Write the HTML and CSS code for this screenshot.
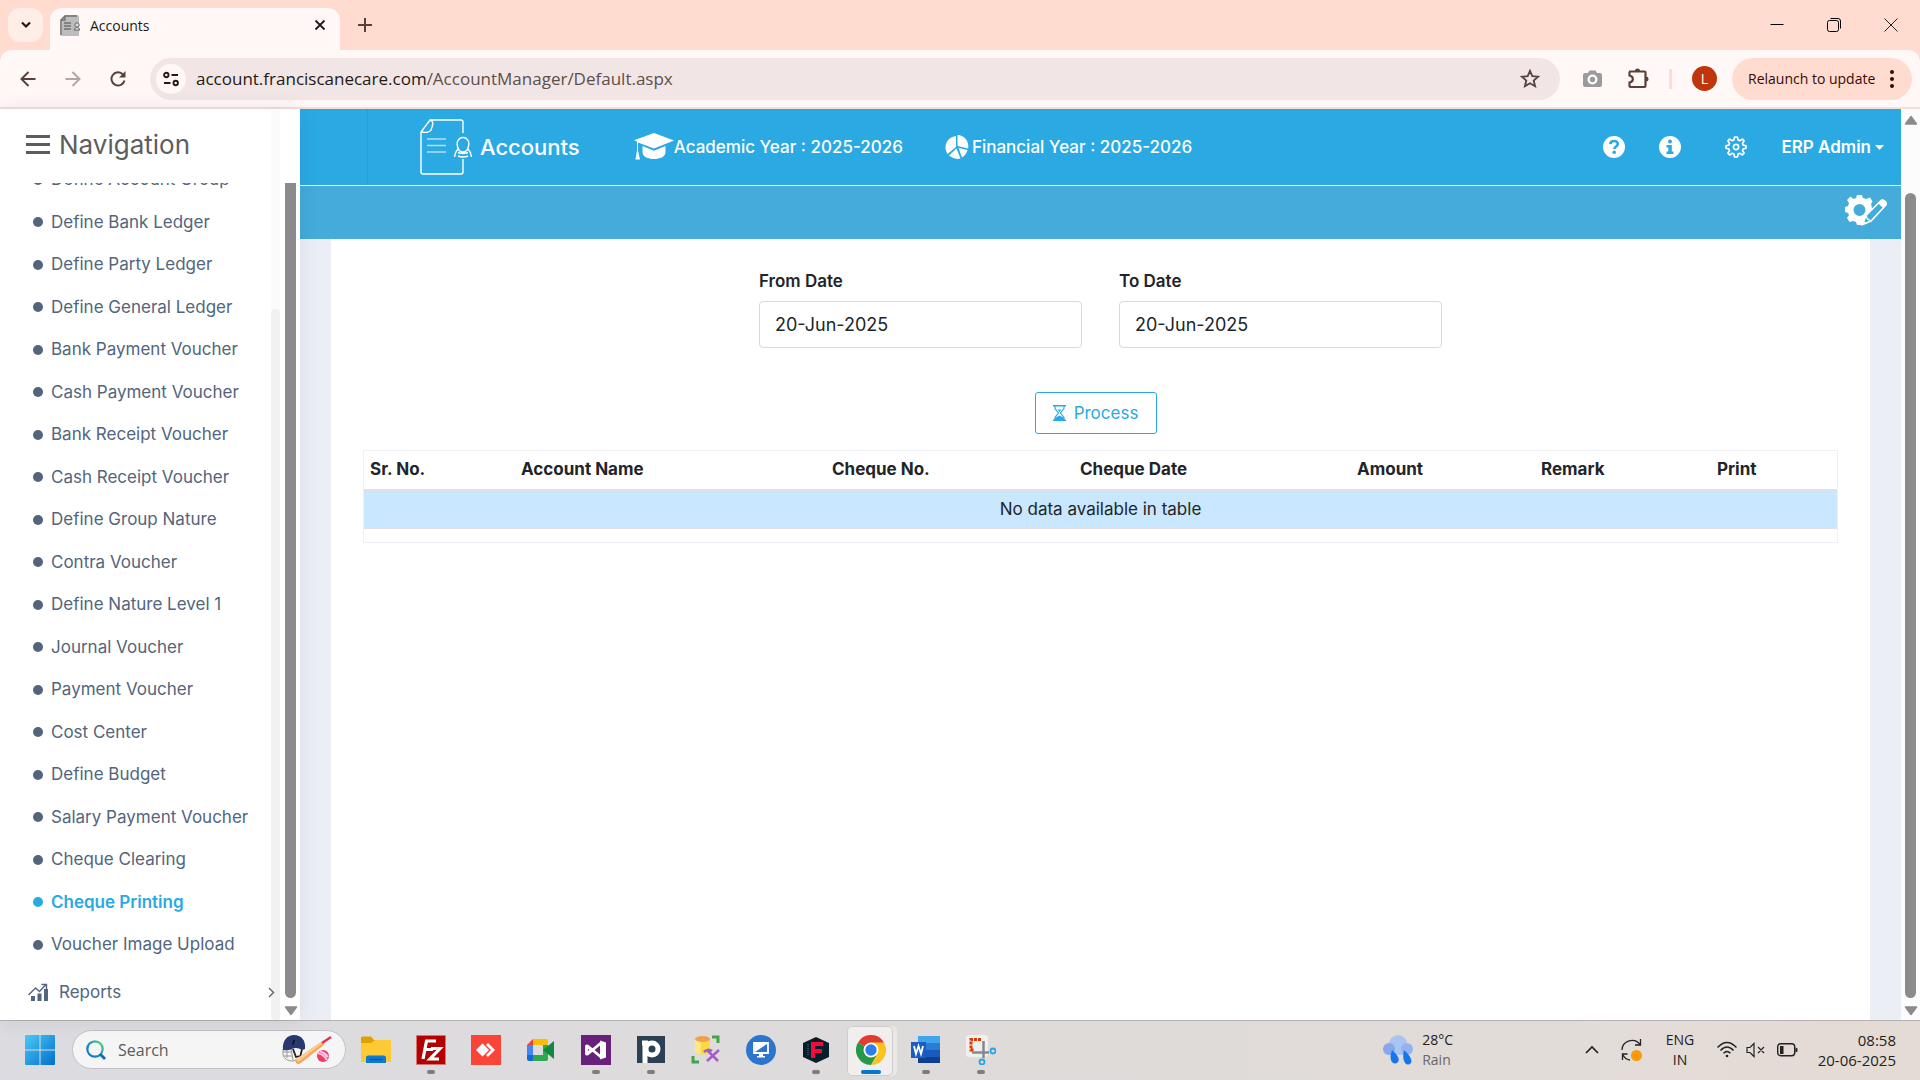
FILE: index.html
```html
<!DOCTYPE html>
<html lang="en">
<head>
<meta charset="utf-8">
<title>Accounts</title>
<link rel="stylesheet" href="styles.css">
</head>
<body>
<header class="browser">
  <div class="tabstrip">
    <button class="tab-search" aria-label="Search tabs"><svg width="12" height="8" viewBox="0 0 12 8"><path d="M2 1.500l4 4 4-4" fill="none" stroke="#231917" stroke-width="2.200"/></svg></button>
    <div class="tab">
      <svg width="20" height="21" viewBox="0 0 20 21"><path d="M5 0h12a2 2 0 0 1 2 2v19H2a2 2 0 0 1-2-2V5z" fill="#bdbdbd"/><path d="M1 20V5l4-4h12M5 1v4H1M4 8h7M4 11h7M4 14h7" fill="none" stroke="#707070" stroke-width="1.300"/><circle cx="17" cy="10" r="2.200" fill="#ddd" stroke="#666"/><path d="M14 15q3-6 6 0z" fill="#ddd" stroke="#666"/></svg>
      <span class="tab-title">Accounts</span>
      <button class="plain" aria-label="Close tab"><svg width="12" height="12" viewBox="0 0 12 12"><path d="M1.500 1.500l9 9M10.500 1.500l-9 9" stroke="#231917" stroke-width="1.800"/></svg></button>
    </div>
    <button class="plain" aria-label="New tab"><svg width="14" height="14" viewBox="0 0 14 14"><path d="M7 0v14M0 7h14" stroke="#5b403a" stroke-width="2"/></svg></button>
    <div class="window-buttons">
      <button class="plain" aria-label="Minimize"><svg width="14" height="14" viewBox="0 0 14 14"><path d="M.5 6.500h13" stroke="#000"/></svg></button>
      <button class="plain" aria-label="Restore"><svg width="14" height="14" viewBox="0 0 14 14"><path d="M.5 4.500a2 2 0 0 1 2-2h7a2 2 0 0 1 2 2v7a2 2 0 0 1-2 2h-7a2 2 0 0 1-2-2zM3.500.5H11A2.500 2.500 0 0 1 13.500 3v7.500" fill="none" stroke="#000"/></svg></button>
      <button class="plain" aria-label="Close"><svg width="14" height="14" viewBox="0 0 14 14"><path d="M.5.5l13 13M13.500.5l-13 13" stroke="#222"/></svg></button>
    </div>
  </div>
  <div class="toolbar">
    <button class="plain" aria-label="Back"><svg width="16" height="16" viewBox="0 0 16 16"><path d="M15.500 8H2M8.500 1L1.500 8l7 7" fill="none" stroke="#5b403a" stroke-width="2"/></svg></button>
    <button class="plain" aria-label="Forward"><svg width="16" height="16" viewBox="0 0 16 16"><path d="M.5 8H14M7.500 1l7 7-7 7" fill="none" stroke="#b5a6a3" stroke-width="2"/></svg></button>
    <button class="plain" aria-label="Reload"><svg width="16" height="16" viewBox="0 0 16 16"><path d="M14.500 9.500A6.600 6.600 0 1 1 13 3.500" fill="none" stroke="#5b403a" stroke-width="2"/><path d="M15.500 0v6.500H9z" fill="#5b403a"/></svg></button>
    <div class="omnibox">
      <button class="site-info" aria-label="Site information"><svg width="16" height="16" viewBox="0 0 16 16"><g fill="none" stroke="#231917" stroke-width="1.900"><circle cx="3.300" cy="4" r="2.200"/><path d="M8.500 4H15M1 12h6.500"/><circle cx="12.700" cy="12" r="2.200"/></g></svg></button>
      <span class="url">account.franciscanecare.com<span class="path">/AccountManager/Default.aspx</span></span>
      <button class="plain" aria-label="Bookmark"><svg width="20" height="19" viewBox="0 0 20 19"><path d="M10 1.800l2.300 5.400 5.900.5-4.500 3.800 1.400 5.700L10 14.200l-5.100 3 1.400-5.700L1.800 7.700l5.900-.5z" fill="none" stroke="#53433f" stroke-width="1.800"/></svg></button>
    </div>
    <button class="plain" aria-label="Screenshot"><svg width="19" height="18" viewBox="0 0 19 18"><path d="M2 3h3l1.500-2.500h6L14 3h3a2 2 0 0 1 2 2v10a2 2 0 0 1-2 2H2a2 2 0 0 1-2-2V5a2 2 0 0 1 2-2z" fill="#9b9b9b"/><circle cx="9.500" cy="9.500" r="5" fill="#fff"/><circle cx="9.500" cy="9.500" r="2.700" fill="#9b9b9b"/></svg></button>
    <button class="plain" aria-label="Extensions"><svg width="21" height="21" viewBox="0 0 21 21"><path d="M2 3.500h14.500a1 1 0 0 1 1 1V18a1 1 0 0 1-1 1H2.500a1 1 0 0 1-1-1v-3.500c4.500-1 4.500-6 0-7V4.500z" fill="none" stroke="#5b403a" stroke-width="2.200"/><path d="M7 3a2.500 2.500 0 0 1 5 0zM18 8.500a2.500 2.500 0 0 1 0 5z" fill="#5b403a"/></svg></button>
    <span class="toolbar-rule"></span>
    <button class="avatar">L</button>
    <button class="relaunch">Relaunch to update<svg width="4" height="18" viewBox="0 0 4 18" fill="#3a0a00"><circle cx="2" cy="2" r="2"/><circle cx="2" cy="9" r="2"/><circle cx="2" cy="16" r="2"/></svg></button>
  </div>
</header>

<div class="app">
  <nav class="sidebar">
    <div class="sidebar-head"><svg width="24" height="19" viewBox="0 0 24 19"><path d="M0 1.500h24M0 9.500h24M0 17.500h24" stroke="#5d5d5d" stroke-width="2.800"/></svg>Navigation</div>
    <div class="sidebar-scroll">
      <ul class="menu">
        <li><a href="#">Define Account Group</a></li>
        <li><a href="#">Define Bank Ledger</a></li>
        <li><a href="#">Define Party Ledger</a></li>
        <li><a href="#">Define General Ledger</a></li>
        <li><a href="#">Bank Payment Voucher</a></li>
        <li><a href="#">Cash Payment Voucher</a></li>
        <li><a href="#">Bank Receipt Voucher</a></li>
        <li><a href="#">Cash Receipt Voucher</a></li>
        <li><a href="#">Define Group Nature</a></li>
        <li><a href="#">Contra Voucher</a></li>
        <li><a href="#">Define Nature Level 1</a></li>
        <li><a href="#">Journal Voucher</a></li>
        <li><a href="#">Payment Voucher</a></li>
        <li><a href="#">Cost Center</a></li>
        <li><a href="#">Define Budget</a></li>
        <li><a href="#">Salary Payment Voucher</a></li>
        <li><a href="#">Cheque Clearing</a></li>
        <li><a href="#" class="active">Cheque Printing</a></li>
        <li><a href="#">Voucher Image Upload</a></li>
      </ul>
      <a href="#" class="reports"><svg width="21" height="19" viewBox="0 0 21 19" fill="#52657d"><path d="M3 13h4v5H3zM9.500 10.500h4V18h-4zM16 6h4v12h-4z"/><path d="M.5 12L7.500 5l4 3.500 6-6.500M13.500 1.500h5v4.500" fill="none" stroke="#52657d" stroke-width="1.400"/></svg><span>Reports</span><svg width="7" height="11" viewBox="0 0 7 11"><path d="M1 1l4.500 4.500L1 10" fill="none" stroke="#52657d" stroke-width="1.400"/></svg></a>
    </div>
    <div class="inner-track"><div class="inner-thumb"></div></div>
    <div class="side-bar"><div class="thumb"></div><svg width="14" height="10" viewBox="0 0 14 10"><path d="M1.500 1h11L7 8.500z" fill="#8b8b8b" stroke="#8b8b8b" stroke-width="1.500" stroke-linejoin="round"/></svg></div>
  </nav>

  <main class="main">
    <div class="topbar">
      <span class="topbar-rule"></span>
      <svg class="logo" width="52" height="56" viewBox="0 0 52 56" fill="none" stroke="#fff" stroke-width="1.400"><path d="M43 14V3a2 2 0 0 0-2-2H10L1 13v40a2 2 0 0 0 2 2h38a2 2 0 0 0 2-2V40M10 1.500c3 0 3 2 2.500 5L11 11c-1 2-5 3-9.500 2"/><path d="M7 20h19M7 26.500h19M7 33h19" stroke="#b5e0f6"/><path d="M38 29c-5-14 15-14 10 0-1 3-3 4-5 4s-4-1-5-4zM38 30c-2 2-3 5-3.500 8M48 30c2 2 3 5 3.500 8M38 33.500q5 2 10 0M38 37q5 2 10 0"/></svg>
      <h1 class="app-name">Accounts</h1>
      <div class="year academic"><svg width="40" height="28" viewBox="0 0 40 28" fill="#fff"><path d="M20 0l20 7.500-20 8L4 9.500v8l2 9H1.500L3 17V8.500L0 7.300z"/><path d="M8.500 13L20 17.700 31.500 13v6c0 5-6 7-11.500 7S8.500 24 8.500 19z"/></svg><span>Academic Year : 2025-2026</span></div>
      <div class="year financial"><svg width="24" height="24" viewBox="0 0 24 24" fill="#fff"><path d="M12.500 0A11 11 0 0 1 23 13.500L12.500 11zM11 1v11L2.500 19A11.500 11.500 0 0 1 11 1zM11.500 13.500l4 10q-6 1.500-11.500-3zM13.500 13l9 2q-1 5-5.500 7.500z"/></svg><span>Financial Year : 2025-2026</span></div>
      <div class="actions">
        <button class="plain" aria-label="Help"><svg width="22" height="22" viewBox="0 0 22 22"><circle cx="11" cy="11" r="11" fill="#fff"/><path d="M7.300 8.200c.3-4.400 7.600-4.100 7.500-.2 0 2.500-3.300 2.400-3.500 5" fill="none" stroke="#2ba9e3" stroke-width="2.700"/><circle cx="11.200" cy="16.300" r="1.800" fill="#2ba9e3"/></svg></button>
        <button class="plain" aria-label="Information"><svg width="22" height="22" viewBox="0 0 22 22"><circle cx="11" cy="11" r="11" fill="#fff"/><path d="M7.500 9h5.300v6.500h1.700V18h-7v-2.500h1.800v-4H7.500z" fill="#2ba9e3"/><circle cx="11" cy="5.500" r="2" fill="#2ba9e3"/></svg></button>
        <button class="plain settings" aria-label="Settings"><svg width="22" height="22" viewBox="0 0 22 22" fill="none" stroke="#fff" stroke-width="1.700"><path d="M9.600 1h2.800l.7 3 1.600.7 2.700-1.600 1.700 1.700-1.600 2.700.7 1.600 2.800.7v2.400l-2.800.7-.7 1.600 1.600 2.700-1.700 1.700-2.700-1.600-1.600.7-.7 3H9.600l-.7-3-1.600-.7-2.700 1.600-1.700-1.700 1.600-2.700-.7-1.600-2.800-.7V9.800l2.800-.7.7-1.600-1.600-2.700 1.700-1.700 2.700 1.600 1.600-.7z" stroke-linejoin="round"/><circle cx="11" cy="11" r="2.600"/></svg></button>
        <button class="user">ERP Admin<svg width="9" height="5" viewBox="0 0 9 5"><path d="M0 0h9L4.500 5z" fill="#fff"/></svg></button>
      </div>
    </div>
    <div class="subbar"><button class="plain" aria-label="Customize"><svg width="42" height="31" viewBox="0 0 42 31"><path fill="#fff" fill-rule="evenodd" d="M12 0h5l1 3 3 1 4-1.500 2.500 4L26 9l1 4 2 1-9 11-2 5h-6l-1-3-3-1-3.500 1L2 23l2-3-1-2-3-1v-5l3-1 1-3-2-3 3.500-3.500L8.500 4 11 3zM14.500 9a6 6 0 1 0 0 12 6 6 0 0 0 0-12z"/><path d="M17.500 29.500l3.500-9L36 5.500q2-1.500 4.500 1.200 1.500 2 0 3.800L26 26z" fill="#44abdb" stroke="#fff" stroke-width="1.600"/><path d="M33 8l4-3.500q5 1 4.500 5L38 13zM17 30l1.500-4 3 2.500z" fill="#fff"/><path d="M21 20.500l1.500 3.500L26 26" fill="none" stroke="#fff" stroke-width="1.300"/></svg></button></div>
    <div class="content">
      <form class="filters">
        <div class="field"><label for="from">From Date</label><input id="from" type="text" value="20-Jun-2025"></div>
        <div class="field"><label for="to">To Date</label><input id="to" type="text" value="20-Jun-2025"></div>
      </form>
      <div class="process-row"><button class="process"><svg width="13" height="16" viewBox="0 0 13 16"><path d="M0 .8h13M0 15.200h13" stroke="#2ba9e3" stroke-width="1.600"/><path d="M2 1v2.500L5.500 8 2 12.500V15M11 1v2.500L7.500 8l3.500 4.500V15" fill="none" stroke="#2ba9e3" stroke-width="1.200"/><path d="M4.500 4.500h4L6.500 7zM2 15v-2L6.500 10.500 11 13v2z" fill="#2ba9e3"/></svg>Process</button></div>
      <div class="table-box">
        <table>
          <colgroup><col class="c-sr"><col class="c-name"><col class="c-no"><col class="c-date"><col class="c-amount"><col class="c-remark"><col class="c-print"></colgroup>
          <thead><tr><th>Sr. No.</th><th>Account Name</th><th>Cheque No.</th><th>Cheque Date</th><th>Amount</th><th>Remark</th><th>Print</th></tr></thead>
          <tbody><tr><td colspan="7">No data available in table</td></tr></tbody>
        </table>
      </div>
    </div>
  </main>
  <div class="page-bar"><svg width="14" height="10" viewBox="0 0 14 10"><path d="M1.500 9h11L7 1.500z" fill="#8b8b8b" stroke="#8b8b8b" stroke-width="1.500" stroke-linejoin="round"/></svg><div class="thumb"></div><svg width="14" height="10" viewBox="0 0 14 10"><path d="M1.500 1h11L7 8.500z" fill="#8b8b8b" stroke="#8b8b8b" stroke-width="1.500" stroke-linejoin="round"/></svg></div>
</div>

<footer class="taskbar">
  <button class="plain start" aria-label="Start"><svg width="30" height="30" viewBox="0 0 30 30"><defs><linearGradient id="win" x1="0" y1="0" x2="1" y2="1"><stop offset="0" stop-color="#4cc9f8"/><stop offset="1" stop-color="#006fcc"/></linearGradient></defs><path d="M1 0h13.500v14.500H0V1a1 1 0 0 1 1-1zM15.500 0H29a1 1 0 0 1 1 1v13.500H15.500zM0 15.500h14.500V30H1a1 1 0 0 1-1-1zM15.500 15.500H30V29a1 1 0 0 1-1 1H15.500z" fill="url(#win)"/></svg></button>
  <label class="search">
    <svg width="20" height="20" viewBox="0 0 20 20"><defs><linearGradient id="lens" x1="1" y1="0" x2="0" y2="1"><stop offset="0" stop-color="#5ddb7a"/><stop offset=".5" stop-color="#1b8fc4"/><stop offset="1" stop-color="#0c6fd0"/></linearGradient></defs><circle cx="9" cy="9" r="7.700" fill="none" stroke="url(#lens)" stroke-width="2.200"/><path d="M14 14l5 5" stroke="#0b6cbf" stroke-width="2.800"/></svg>
    <input type="text" placeholder="Search" aria-label="Search">
    <svg width="50" height="29" viewBox="0 0 50 29"><g fill="none" stroke="#999" stroke-width="1"><path d="M1 14v6q2 6 10 6l3-1M1 17h8M2 21h8M5 14v9M9 14l2 11"/><path d="M11 14l3 8 4-1M20 14l-2 9" stroke="#222" stroke-width="1.800"/></g><path d="M1 15C0 5 6 0 12 0c7 0 12 5 11 14q-3 1.500-6-.5-4-1-7 .5-4 2-9 1z" fill="#26386f"/><path d="M11 10q0-3 1.500-5" stroke="#111" stroke-width="1.500" fill="none"/><path d="M13 25L39 7q3 0 3 3L19 28q-3 2-5 0z" fill="#f2a95c"/><path d="M14 24L39 7l2 1L16 27z" fill="#fbcb91"/><path d="M40 8l9-6" stroke="#e0364c" stroke-width="2.500"/><circle cx="41" cy="21" r="6" fill="#ee3e5d"/><path d="M36 18q5 1 9 7M38 16q5 2 8 6" stroke="#ffc0e8" stroke-width="2.200" fill="none"/></svg>
  </label>
  <div class="apps">
    <button class="app-icon" aria-label="File Explorer"><svg width="30" height="30" viewBox="0 0 30 30"><path d="M0 3a1.500 1.500 0 0 1 1.500-1.500H10L13 5h16v5H0z" fill="#dfa000"/><path d="M0 8h10l4-3h15a1 1 0 0 1 1 1v21H0z" fill="#fdc935"/><path d="M5 28v-5a2.500 2.500 0 0 1 2.500-2.500h15A2.500 2.500 0 0 1 25 23v5z" fill="#0a7bd0"/><path d="M8.500 24.500h13" stroke="#075397" stroke-width="1.300"/></svg></button>
    <button class="app-icon running" aria-label="FileZilla"><svg width="30" height="30" viewBox="0 0 30 30"><path d="M.5.5h29v29H.5z" fill="#b30000" stroke="#d77" stroke-dasharray="2 1"/><path d="M7 24L10.500 6H20M8.500 14.500H17M15 13.500h9L14 24h9" fill="none" stroke="#fff" stroke-width="3.200"/></svg></button>
    <button class="app-icon" aria-label="AnyDesk"><svg width="30" height="30" viewBox="0 0 30 30"><path d="M0 0h30v30H0z" fill="#fb4438"/><path d="M5 15l6.500-6.500L18 15l-6.500 6.500z" fill="#fff"/><path d="M16 9l6 6-6 6" fill="none" stroke="#fff" stroke-width="2.800"/></svg></button>
    <button class="app-icon" aria-label="Google Meet"><svg width="30" height="30" viewBox="0 0 30 30"><path d="M1 10l6-6v6z" fill="#e94235"/><path d="M7 4h13a2 2 0 0 1 2 2v4H7z" fill="#fbbc04"/><path d="M1 10h6v12H1z" fill="#4285f4"/><path d="M1 20h6v6H3a2 2 0 0 1-2-2z" fill="#1a67d2"/><path d="M7 20h10V10h5v14a2 2 0 0 1-2 2H7z" fill="#2da94f"/><path d="M17 15l11-9v18z" fill="#11883d"/></svg></button>
    <button class="app-icon running" aria-label="Visual Studio"><svg width="30" height="30" viewBox="0 0 30 30"><path d="M0 0h30v30H0z" fill="#68217a"/><path d="M5.500 11v8L11 15zM6 10.500L20 22M6 19.500L20 8" fill="none" stroke="#fff" stroke-width="2.800" stroke-linejoin="round"/><path d="M19 5.500l6 2v15l-6 2z" fill="#fff"/></svg></button>
    <button class="app-icon running" aria-label="Publisher"><svg width="30" height="30" viewBox="0 0 30 30"><path d="M1 1h28v27H1z" fill="#2d4052"/><path d="M9 28V7M6 8h6" stroke="#fff" stroke-width="5"/><circle cx="16" cy="14" r="6" fill="none" stroke="#fff" stroke-width="5"/></svg></button>
    <button class="app-icon" aria-label="Database tools"><svg width="30" height="30" viewBox="0 0 30 30"><path d="M4 4h15v14q-7 3-15 0z" fill="#ffd93b"/><path d="M4 4h6v15l-6-1z" fill="#ffe97f"/><ellipse cx="11.500" cy="4" rx="7.500" ry="3" fill="#f0a050"/><path d="M21 2h6v6M2 21v6h6" fill="none" stroke="#46a34c" stroke-width="3"/><path d="M13 17q4-4 8-1M16 15l11 11M28 15L16 26" fill="none" stroke="#a55cc8" stroke-width="2.500"/></svg></button>
    <button class="app-icon" aria-label="Remote Desktop"><svg width="30" height="30" viewBox="0 0 30 30"><circle cx="15" cy="15" r="15" fill="#2c75cf"/><path d="M8 8h14v10H8z" fill="none" stroke="#fff" stroke-width="1.800"/><path d="M9 17V9h12zM13 18h4v3h2v1.500h-8V21h2z" fill="#fff"/></svg></button>
    <button class="app-icon running" aria-label="FortiClient"><svg width="30" height="30" viewBox="0 0 30 30"><path d="M15 2l13 6v14l-13 6-13-6V8z" fill="#041e2c"/><path d="M10 7h12v4h-8v3h7v4h-7v5h-4z" fill="#f40a3d"/><path d="M7 9v12" stroke="#456" stroke-width="1.500" stroke-dasharray="1 1"/></svg></button>
    <button class="app-icon running current" aria-label="Chrome"><svg width="30" height="30" viewBox="0 0 30 30"><path d="M15 15L2 7.500a15 15 0 0 1 26 0z" fill="#e33b2e"/><path d="M15 15L2 7.500A15 15 0 0 0 15 30l6.500-11z" fill="#279847"/><path d="M15 7.500h13A15 15 0 0 1 15 30l6.500-11z" fill="#fcc31e"/><circle cx="15" cy="15" r="7.500" fill="#fff"/><circle cx="15" cy="15" r="5.700" fill="#2f7de9"/></svg></button>
    <button class="app-icon running" aria-label="Word"><svg width="30" height="30" viewBox="0 0 30 30"><path d="M7 1h22v7H7z" fill="#41a5ee"/><path d="M7 8h22v7H7z" fill="#2b7cd3"/><path d="M7 15h22v7H7z" fill="#185abd"/><path d="M7 22h22v6H7z" fill="#103f91"/><path d="M0 7h15v16H0z" fill="#1a5dbe"/><path d="M3 11l2 8 2.500-8 2.500 8 2-8" fill="none" stroke="#fff" stroke-width="1.800"/></svg></button>
    <button class="app-icon running" aria-label="Snipping Tool"><svg width="30" height="30" viewBox="0 0 30 30"><rect width="22" height="22" rx="3" fill="#f0f0f0"/><path d="M15 4.500H5V15h3" fill="none" stroke="#d83b01" stroke-width="3" stroke-dasharray="3 1"/><path d="M6 17.500h17M17.500 6v17" stroke="#85898e" stroke-width="2.500"/><circle cx="27" cy="16" r="2.500" fill="none" stroke="#2aa3e8" stroke-width="1.800"/><circle cx="16" cy="27" r="2.500" fill="none" stroke="#2aa3e8" stroke-width="1.800"/></svg></button>
  </div>
  <div class="weather"><svg width="30" height="30" viewBox="0 0 30 30"><circle cx="15" cy="9" r="9" fill="#a9c4f2"/><rect x="5" y="9" width="20" height="11" fill="#a9c4f2"/><circle cx="24" cy="14" r="6" fill="#94b3ec"/><circle cx="6" cy="14" r="6" fill="#86a8e8"/><path d="M9 15q9 8 6 12-3 3-6 0-3-4 0-12zM21 15q9 8 7 13-3 3-6 0-3-4-1-13z" fill="#1677ed"/></svg><div><span>28°C</span><span class="muted">Rain</span></div></div>
  <div class="tray">
    <svg width="14" height="9" viewBox="0 0 14 9"><path d="M1 8l6-6 6 6" fill="none" stroke="#222" stroke-width="1.700"/></svg>
    <svg class="sync" width="22" height="24" viewBox="0 0 22 24"><path d="M1 12A10 10 0 0 1 19 6.500M19.500 1v6H14M9 22a9 9 0 0 1-7-5M1.500 22v-6h5" fill="none" stroke="#222" stroke-width="1.300"/><circle cx="15.500" cy="17.500" r="5.500" fill="#fa9a0a"/></svg>
    <div class="lang"><span>ENG</span><span>IN</span></div>
    <svg class="wifi" width="20" height="17" viewBox="0 0 20 17" fill="none" stroke="#222" stroke-width="1.500"><path d="M.5 6.500q9.500-10 19 0M3.500 9.500q6.500-7 13 0M6.500 12.300q3.500-3.500 7 0"/><circle cx="10" cy="15" r="1.300" fill="#222" stroke="none"/></svg>
    <svg class="sound" width="20" height="16" viewBox="0 0 20 16" fill="none" stroke="#222" stroke-width="1.200"><path d="M1 5.500h3l4-4v13l-4-4H1zM12 5l6 6M18 5l-6 6"/></svg>
    <svg width="21" height="14" viewBox="0 0 21 14"><rect x=".7" y=".7" width="17" height="12" rx="3" fill="none" stroke="#222" stroke-width="1.400"/><path d="M3 3h3.500v8H3zM18.500 4.500l2 1v3l-2 1z" fill="#222"/></svg>
    <div class="clock"><span>08:58</span><span>20-06-2025</span></div>
  </div>
</footer>
</body>
</html>
```
FILE: styles.css
```css
* { box-sizing: border-box; }
body {
  margin: 0;
  height: 100vh;
  display: flex;
  flex-direction: column;
  overflow: hidden;
  font-family: Inter, "Liberation Sans", sans-serif;
  color: #212529;
}
button, input { font: inherit; color: inherit; }
button { padding: 0; border: 0; background: none; }
a { color: inherit; text-decoration: none; }
svg { display: block; flex: none; }
.plain { flex: none; }

/* Browser chrome */
.browser, .taskbar { font-family: "Open Sans", "Noto Sans", sans-serif; flex: none; }
.browser { background: #ffdbd0; border-bottom: 2px solid #f5ddd8; }
.tabstrip { display: flex; align-items: center; height: 50px; padding-left: 8px; }
.tab-search {
  display: grid;
  place-items: center;
  width: 35px;
  height: 34px;
  margin-right: 7px;
  border-radius: 12px;
  background: #ffede7;
}
.tab {
  align-self: flex-end;
  display: flex;
  align-items: center;
  width: 290px;
  height: 42px;
  margin-right: 18px;
  padding: 0 14px 8px 10px;
  border-radius: 12px 12px 0 0;
  background: #fff8f6;
  color: #231917;
  font-size: 14px;
}
.tab-title { flex: 1; padding-left: 10px; }
.window-buttons { display: flex; gap: 43px; margin-left: auto; padding-right: 22px; }
.toolbar {
  display: flex;
  align-items: center;
  height: 57px;
  padding: 0 8px 0 20px;
  border-radius: 12px 12px 0 0;
  background: #fff8f6;
}
.toolbar > .plain { margin-right: 29px; }
.toolbar > .plain:nth-of-type(3) { margin-right: 24px; }
.omnibox {
  flex: 1;
  display: flex;
  align-items: center;
  height: 42px;
  margin-right: 23px;
  padding: 0 20px 0 6px;
  border-radius: 21px;
  background: #f1e6e5;
}
.site-info { display: grid; place-items: center; width: 30px; height: 30px; border-radius: 50%; background: #fff8f6; }
.url { flex: 1; padding-left: 10px; font-size: 17px; color: #231917; }
.path { color: #5c4f4c; }
.toolbar > .plain:nth-of-type(4) { margin-right: 26px; }
.toolbar > .plain:nth-of-type(5) { margin-right: 20px; }
.toolbar-rule { width: 3px; height: 20px; background: #ffdbd0; }
.avatar { width: 25px; height: 25px; margin: 0 15px 0 20px; border-radius: 50%; background: #bf360c; color: #fff; font-size: 14px; }
.relaunch {
  display: flex;
  align-items: center;
  justify-content: space-between;
  width: 180px;
  height: 42px;
  padding: 0 18px 0 16px;
  border-radius: 21px;
  background: #ffdbd0;
  color: #3a0a00;
  font-size: 14px;
  white-space: nowrap;
}

/* Application */
.app { flex: 1; min-height: 0; display: flex; }
.sidebar {
  position: relative;
  z-index: 1;
  flex: none;
  width: 300px;
  display: flex;
  flex-direction: column;
  background: #fff;
  box-shadow: 0 0 20px rgba(0, 0, 0, .08);
}
.sidebar-head {
  display: flex;
  align-items: center;
  gap: 9px;
  flex: none;
  height: 74px;
  padding: 0 0 4px 26px;
  color: #5d5d5d;
  font-size: 26px;
}
.sidebar-scroll { flex: 1; min-height: 0; overflow: hidden; color: #52657d; font-size: 17px; line-height: 1.5; }
.menu { margin: -24px 0 0; padding: 0; list-style: none; }
.menu a { display: flex; align-items: center; gap: 8px; padding: 8px 0 9px 33px; }
.menu a::before { content: ""; width: 10px; height: 10px; border-radius: 50%; background: currentColor; }
.menu .active { color: #2ba9e3; font-weight: 600; }
.reports { display: flex; align-items: center; gap: 10px; padding: 13px 25px 0 28px; }
.reports span { flex: 1; }
.inner-track { position: absolute; z-index: -1; top: 0; bottom: 0; left: 271px; width: 9px; padding-top: 200px; background: #fbfbfb; }
.inner-thumb { height: 100%; border-radius: 4px; background: #f1f1f1; }
.side-bar { position: absolute; top: 74px; bottom: 0; left: 283px; width: 15px; display: flex; flex-direction: column; align-items: center; padding-bottom: 4px; gap: 8px; }
.thumb { flex: 1; width: 11px; background: #8b8b8b; border-radius: 6px; }
.side-bar .thumb { border-radius: 0 0 6px 6px; }

.main { flex: 1; min-width: 0; display: flex; flex-direction: column; background: #ebeff5; }
.topbar { flex: none; display: flex; align-items: center; height: 77px; border-bottom: 1px solid #fff; background: #2ba9e3; color: #fff; white-space: nowrap; }
.topbar-rule { align-self: stretch; width: 1px; margin: 0 52px 0 67px; background: #2a9fd4; }
.app-name { margin: 0 54px 0 8px; font-size: 22px; font-weight: 500; }
.year { display: flex; align-items: center; font-size: 17px; font-weight: 500; }
.academic { margin-right: 42px; }
.financial { gap: 3px; }
.actions { display: flex; align-items: center; margin-left: auto; gap: 34px; padding-right: 17px; }
.settings { margin-left: 10px; }
.user { display: flex; align-items: center; gap: 4px; font-size: 17px; font-weight: 600; }
.subbar { flex: none; display: flex; align-items: center; justify-content: flex-end; height: 53px; padding: 0 14px 4px 0; background: #44abdb; }
.content { flex: 1; margin: 0 31px; padding: 30px 32px 0; background: #fff; }
.filters { display: flex; justify-content: center; gap: 37px; }
.field { width: 323px; }
.field label { display: block; margin-bottom: 8px; font-size: 17px; line-height: 24px; font-weight: 600; }
.field input { width: 100%; height: 47px; padding: 0 15px; border: 1px solid #d8dadd; border-radius: 4px; background: #fff; font-size: 18px; }
.process-row { display: flex; justify-content: center; padding: 44px 10px 16px 0; }
.process {
  display: flex;
  align-items: center;
  justify-content: center;
  gap: 8px;
  width: 122px;
  height: 42px;
  border: 1px solid #2ba9e3;
  border-radius: 3px;
  background: #fff;
  color: #2ba9e3;
  font-size: 17px;
}
.table-box { padding-bottom: 13px; border: 1px solid #eff0f5; }
table { width: 100%; border-collapse: collapse; table-layout: fixed; font-size: 17px; line-height: 24px; }
th { height: 39px; padding: 0 0 2px 6px; border-bottom: 2px solid #dee2e6; font-weight: 700; text-align: left; }
td { height: 38px; padding: 0; background: #c9e7ff; border-bottom: 1px solid #dee2e6; text-align: center; }
.c-sr { width: 151px; }
.c-name { width: 311px; }
.c-no { width: 248px; }
.c-date { width: 277px; }
.c-amount { width: 184px; }
.c-remark { width: 176px; }
.c-print { width: 126px; }
.page-bar { flex: none; display: flex; flex-direction: column; align-items: center; gap: 8px; width: 19px; padding: 6px 0 4px; background: #fcfcfc; }
.page-bar .thumb { margin-top: 60px; }

/* Taskbar */
.taskbar {
  display: flex;
  align-items: center;
  height: 60px;
  padding: 0 24px 2px 25px;
  border-top: 1px solid #b1afb1;
  background: linear-gradient(90deg, #dcdbe1, #dedbda 50%, #e2dcd8 80%, #e5dbd5);
  color: #222;
  font-size: 14px;
}
.search {
  display: flex;
  align-items: center;
  width: 274px;
  height: 39px;
  margin: 0 15px 0 17px;
  padding: 0 13px;
  border: 1px solid #c3c1c5;
  border-radius: 20px;
  background: #f5f5f6;
}
.search input { flex: 1; min-width: 0; padding: 0 0 0 12px; border: 0; background: none; font-size: 16px; }
.search input::placeholder { color: #5b5b5b; }
.apps { display: flex; gap: 25px; }
.app-icon { position: relative; display: grid; place-items: center; width: 30px; height: 48px; }
.running::after { content: ""; position: absolute; bottom: 0; left: 11px; width: 8px; height: 4px; border-radius: 2px; background: #7e7c7c; }
.current::before { content: ""; position: absolute; top: 0; left: -9px; width: 44px; height: 48px; border: 1px solid #d0cecd; border-radius: 5px; background: #f0efee; box-shadow: 4px 0 0 #e9e8e7; }
.current svg { position: relative; }
.current::after { left: 5px; width: 20px; background: #0078d4; }
.weather { display: flex; gap: 9px; align-items: center; margin-left: auto; }
.weather span, .lang span, .clock span { display: block; line-height: 20px; }
.muted { color: #666; }
.tray { display: flex; align-items: center; margin-left: 132px; }
.sync { margin: 0 22px; }
.lang { width: 30px; text-align: center; }
.wifi { margin: 0 9px 0 22px; }
.sound { margin-right: 11px; }
.clock { width: 80px; margin-left: 18px; font-size: 15px; text-align: right; }
```
